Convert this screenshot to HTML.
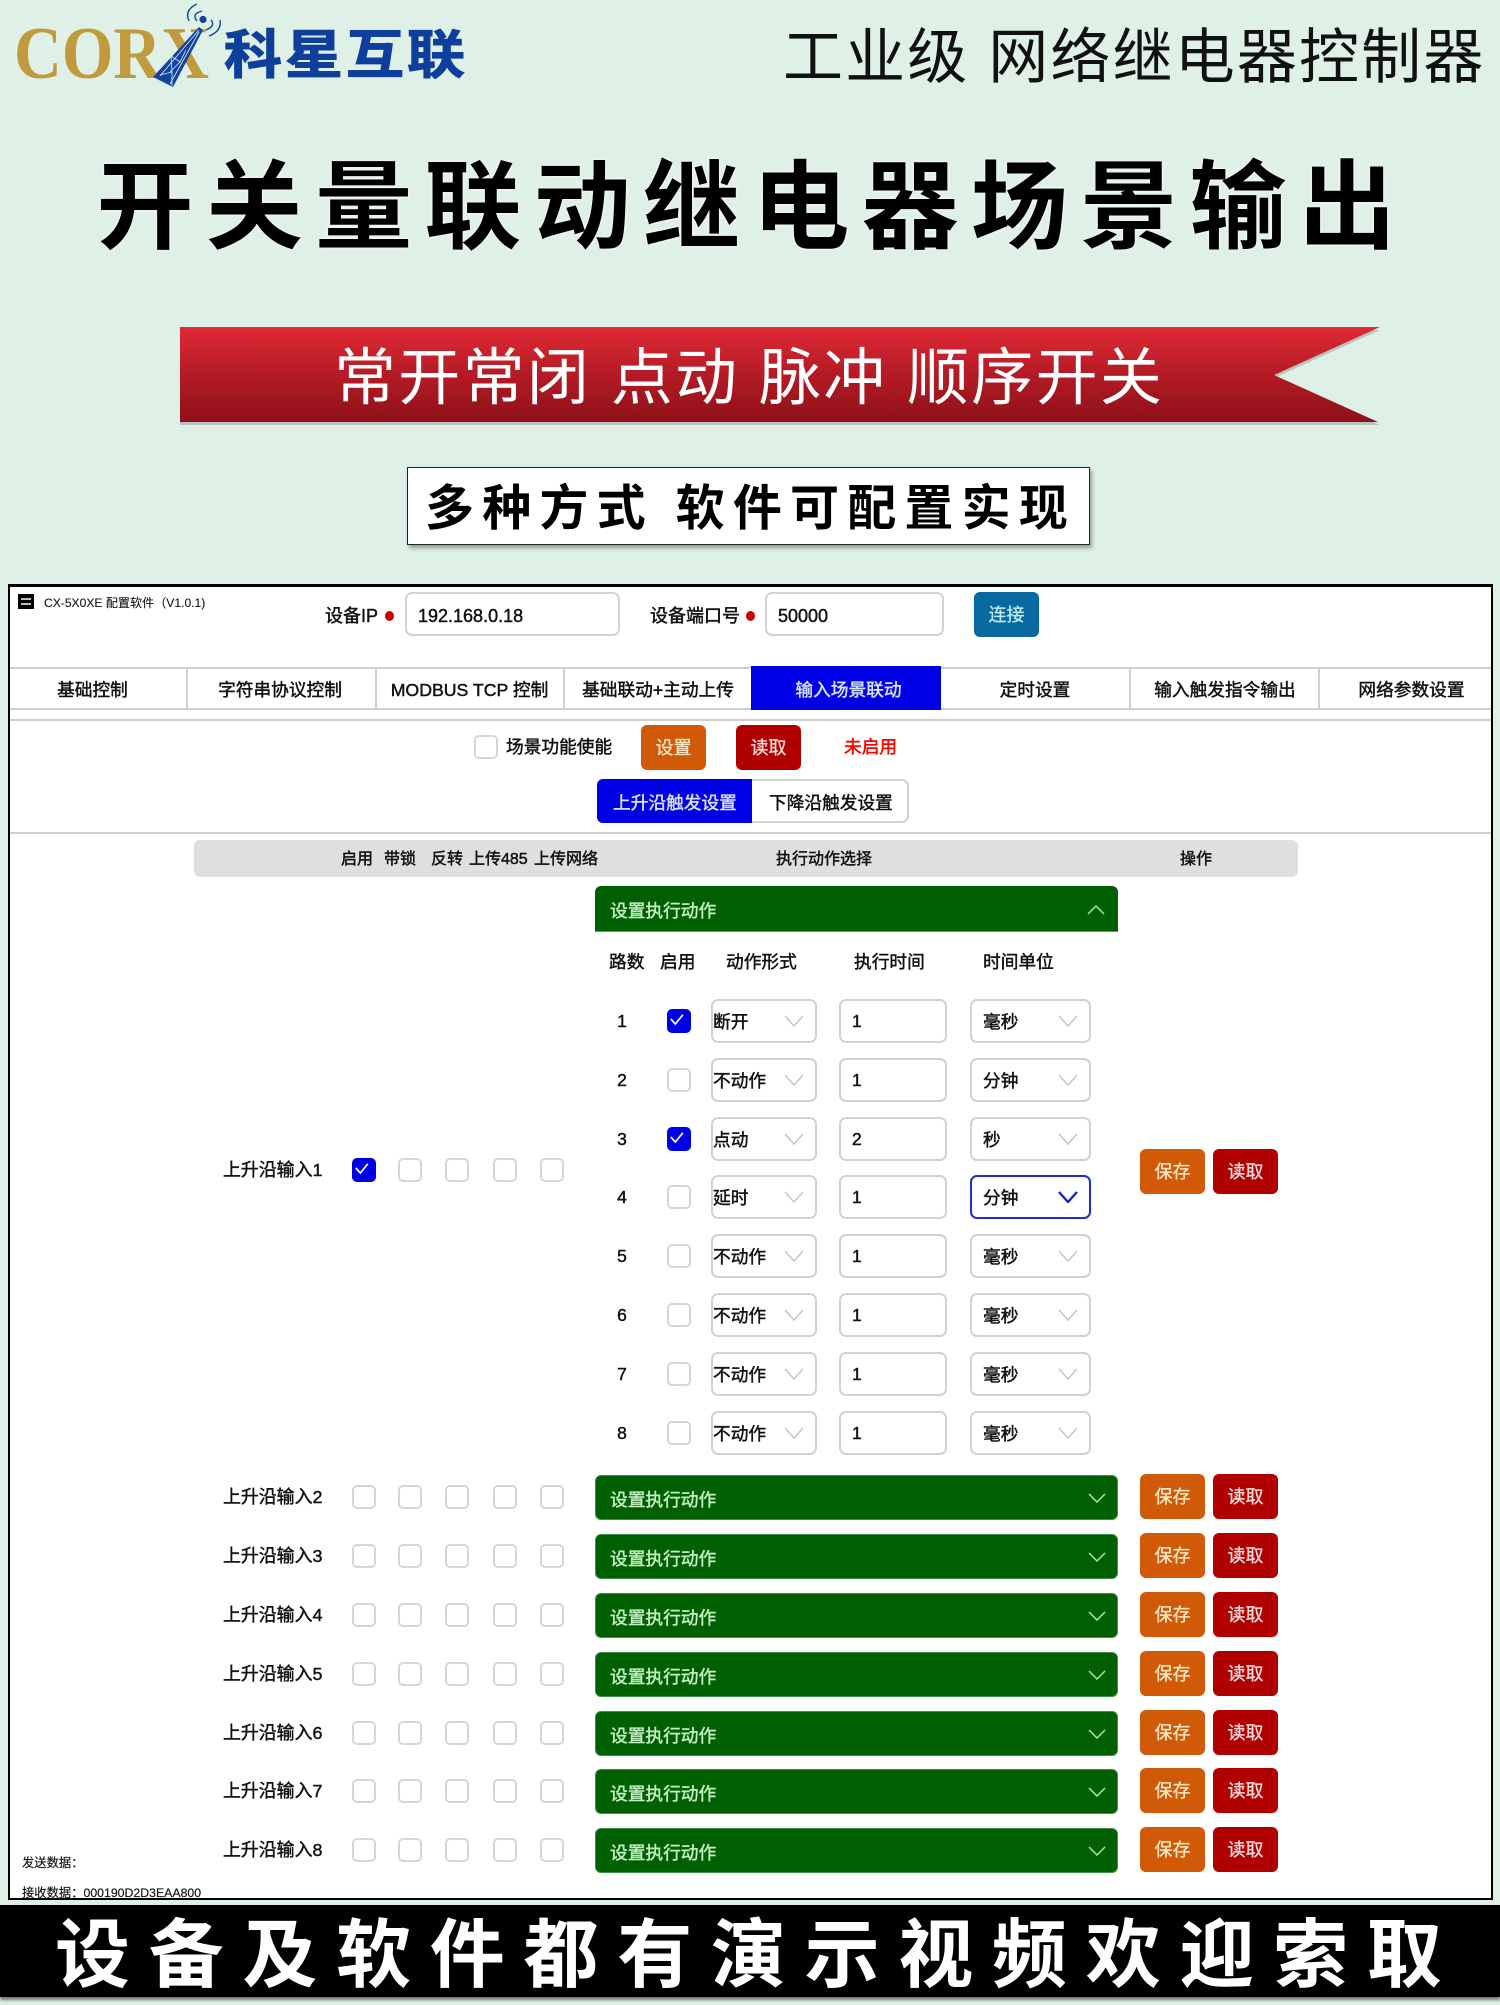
<!DOCTYPE html>
<html lang="zh-CN">
<head>
<meta charset="utf-8">
<title>开关量联动继电器场景输出</title>
<style>
html,body{margin:0;padding:0}
body{width:1500px;height:2000px;position:relative;overflow:hidden;background:#dff0e7;font-family:"Liberation Sans","Noto Sans CJK SC",sans-serif;color:#111}
div,span,svg{position:absolute;box-sizing:border-box}
.t{white-space:nowrap;height:30px;line-height:30px;font-size:17.7px;margin-top:1px;-webkit-text-stroke:.45px currentColor}
.c{text-align:center}
.box{border:2px solid #d6d6d6;border-radius:5px;background:#fff;width:24px;height:24px}
.on{background:#0000e6;border-color:#0000e6}
.in{border:2px solid #d2d2d2;border-radius:7px;background:#fff;height:44px}
.btn{border-radius:6px;height:45px;width:65px;text-align:center;line-height:46px;font-size:18px;-webkit-text-stroke:.3px currentColor}
.or{background:#d05a08;color:#ffeac8}
.rd{background:#b10000;color:#ffdcdc}
.line{background:#cfcfcf;height:2px;left:10px;width:1481px}
.v{background:#cfcfcf;width:2px;top:668px;height:41px}
.row{left:0;width:1500px;height:45px}
.l{left:223px;top:6px;font-size:17.9px}
.x1{left:352px;top:10px}.x2{left:398px;top:10px}.x3{left:445px;top:10px}.x4{left:493px;top:10px}.x5{left:540px;top:10px}
.bar{left:595px;top:0;width:523px;height:45px;background:#005f00;border-radius:6px;border:1px solid #3f8f4a}
.bt{left:610px;top:9px;color:#c4f0c4}
.cv{left:1088px;top:18px;width:18px;height:10px}
.sv{left:1140px;top:-1px}
.rb{left:1213px;top:-1px}
.r{left:0;width:1500px;height:44px}
.n{left:612px;top:6px;width:20px;font-size:17.5px}
.k{left:667px;top:10px}
.s{left:711px;top:0;width:106px}
.i{left:839px;top:0;width:108px}
.u{left:970px;top:0;width:121px}
.st{left:713px;top:7px}
.it{left:852px;top:6px;font-size:17.5px}
.ut{left:983px;top:7px}
.c1{left:784px;top:16px;width:20px;height:12px}
.c2{left:1058px;top:16px;width:20px;height:12px}
</style>
</head>
<body>
<svg width="0" height="0" style="left:0;top:0">
<defs>
<symbol id="chev" viewBox="0 0 20 12"><polyline points="1,1 10,11 19,1" fill="none" stroke="#c8c8c8" stroke-width="1.6"/></symbol>
<symbol id="chevb" viewBox="0 0 20 12"><polyline points="1,1 10,11 19,1" fill="none" stroke="#1a1fd0" stroke-width="2.4"/></symbol>
<symbol id="chevg" viewBox="0 0 18 10"><polyline points="1,1 9,9 17,1" fill="none" stroke="#a6e8a6" stroke-width="1.5"/></symbol>
<symbol id="chk" viewBox="0 0 24 24"><polyline points="4.5,12 10,18 19,7" fill="none" stroke="#fff" stroke-width="2"/></symbol>
</defs>
</svg>

<!-- Logo -->
<div style="left:14px;top:14px;font-family:'Liberation Serif',serif;font-weight:700;font-size:74px;line-height:80px;height:80px;color:#c09a3d;white-space:nowrap;transform:scaleX(.895);transform-origin:0 0">CORX</div>
<svg style="left:140px;top:0" width="90" height="95" viewBox="140 0 90 95">
<polygon points="199,27 203,30 173,87 153,77" fill="#12439f"/>
<path d="M199,30 L160,76 M199,32 L170,84 M186,50 L180,62 L171,56 L172,72 L160,75 M172,72 L172,86 M180,62 L170,72" fill="none" stroke="#dfeff0" stroke-width=".8"/>
<circle cx="203" cy="19.5" r="3.6" fill="#12439f"/>
<path d="M197,4 Q184,10 189,21 M202,11 Q191,14 197,21 M211,20 Q216,26 206,30 M220,20 Q222,31 209,36" fill="none" stroke="#12439f" stroke-width="1.4"/>
</svg>
<div style="left:224px;top:21px;height:70px;line-height:70px;font-size:58px;font-weight:700;letter-spacing:3px;color:#0e3f9c;white-space:nowrap;transform:scaleY(.9);-webkit-text-stroke:1.2px #0e3f9c">科星互联</div>

<!-- Heading -->
<div style="left:783px;top:18px;height:80px;line-height:80px;font-size:60px;letter-spacing:2.15px;color:#111;white-space:nowrap">工业级 网络继电器控制器</div>
<div style="left:96.5px;top:148px;height:120px;line-height:120px;font-size:97px;font-weight:700;letter-spacing:12.3px;color:#000;white-space:nowrap;text-shadow:0 0 3px #fff">开关量联动继电器场景输出</div>

<!-- Ribbon -->
<svg style="left:176px;top:322px" width="1212" height="110" viewBox="176 322 1212 110">
<defs><linearGradient id="rg" x1="0" y1="0" x2="0" y2="1"><stop offset="0" stop-color="#e12a36"/><stop offset=".45" stop-color="#b81c26"/><stop offset="1" stop-color="#8e1019"/></linearGradient></defs>
<polygon points="180,330 1380,330 1274,378 1380,425 180,425" fill="#000" opacity=".18"/>
<polygon points="180,327 1380,327 1274,375 1378,422 180,422" fill="url(#rg)"/>
</svg>
<div style="left:334px;top:339px;height:80px;line-height:80px;font-size:62px;letter-spacing:2.3px;color:#fff;white-space:nowrap">常开常闭 点动 脉冲 顺序开关</div>

<!-- Boxed -->
<div style="left:407px;top:467px;width:683px;height:78px;background:#fff;border:1.5px solid #222;box-shadow:2px 3px 4px rgba(0,0,0,.35)"></div>
<div style="left:425px;top:479px;height:60px;line-height:60px;font-size:49px;font-weight:700;letter-spacing:8.2px;color:#000;white-space:nowrap">多种方式 软件可配置实现</div>

<!-- App frame -->
<div style="left:8px;top:584px;width:1485px;height:1316px;background:#fff;border:2px solid #000;border-top-width:3px"></div>

<div style="left:18px;top:594px;width:16px;height:15px;background:#000"></div>
<div style="left:21px;top:598px;width:10px;height:2px;background:#bbb"></div>
<div style="left:21px;top:603px;width:10px;height:2px;background:#bbb"></div>
<div class="t" style="left:44px;top:587px;font-size:12.1px;-webkit-text-stroke:.1px currentColor">CX-5X0XE 配置软件（V1.0.1)</div>

<div class="t" style="left:325px;top:600px;font-size:18px">设备IP</div>
<div style="left:385px;top:611px;width:9px;height:10px;border-radius:50%;background:#d00000"></div>
<div class="in" style="left:405px;top:592px;width:215px"></div>
<div class="t" style="left:418px;top:600px;font-size:18px">192.168.0.18</div>
<div class="t" style="left:650px;top:600px;font-size:18px">设备端口号</div>
<div style="left:746px;top:611px;width:9px;height:10px;border-radius:50%;background:#d00000"></div>
<div class="in" style="left:765px;top:592px;width:179px"></div>
<div class="t" style="left:778px;top:600px;font-size:18px">50000</div>
<div class="btn" style="left:974px;top:592px;background:#07699f;color:#bfeaf5">连接</div>

<!-- Tabs -->
<div class="line" style="top:667px"></div>
<div class="line" style="top:708px"></div>
<div class="v" style="left:186px"></div>
<div class="v" style="left:375px"></div>
<div class="v" style="left:563px"></div>
<div class="v" style="left:1129px"></div>
<div class="v" style="left:1318px"></div>
<div style="left:751px;top:666px;width:190px;height:44px;background:#0000e6"></div>
<div class="t c" style="left:10px;width:165px;top:674px">基础控制</div>
<div class="t c" style="left:186px;width:188px;top:674px">字符串协议控制</div>
<div class="t c" style="left:376px;width:187px;top:674px">MODBUS TCP 控制</div>
<div class="t c" style="left:564px;width:188px;top:674px">基础联动+主动上传</div>
<div class="t c" style="left:751px;width:195px;top:674px;color:#d8e4ff">输入场景联动</div>
<div class="t c" style="left:941px;width:188px;top:674px">定时设置</div>
<div class="t c" style="left:1130px;width:190px;top:674px">输入触发指令输出</div>
<div class="t c" style="left:1319px;width:185px;top:674px">网络参数设置</div>
<div class="line" style="top:719px"></div>

<!-- Enable row -->
<div class="box" style="left:474px;top:735px"></div>
<div class="t" style="left:506px;top:731px">场景功能使能</div>
<div class="btn or" style="left:641px;top:725px">设置</div>
<div class="btn rd" style="left:736px;top:725px">读取</div>
<div class="t" style="left:844px;top:731px;color:#f00;-webkit-text-stroke:.5px #f00">未启用</div>

<div style="left:597px;top:779px;width:155px;height:44px;background:#0000e6;border-radius:6px 0 0 6px"></div>
<div class="t" style="left:613px;top:787px;color:#d8e4ff">上升沿触发设置</div>
<div style="left:752px;top:779px;width:157px;height:44px;background:#fff;border:2px solid #d2d2d2;border-left:0;border-radius:0 7px 7px 0"></div>
<div class="t" style="left:769px;top:787px">下降沿触发设置</div>
<div class="line" style="top:832px"></div>

<!-- Header bar -->
<div style="left:194px;top:840px;width:1104px;height:37px;background:#dfdfdf;border-radius:6px"></div>
<div class="t" style="left:341px;top:844px;font-size:16px">启用</div>
<div class="t" style="left:384px;top:844px;font-size:16px">带锁</div>
<div class="t" style="left:431px;top:844px;font-size:16px">反转</div>
<div class="t" style="left:469px;top:844px;font-size:16px">上传485</div>
<div class="t" style="left:534px;top:844px;font-size:16px">上传网络</div>
<div class="t" style="left:776px;top:844px;font-size:16px">执行动作选择</div>
<div class="t" style="left:1180px;top:844px;font-size:16px">操作</div>

<!-- Open panel -->
<div style="left:595px;top:886px;width:523px;height:46px;background:#005f00;border-radius:6px 6px 0 0;border-bottom:1px solid #5aa05a"></div>
<div class="t" style="left:610px;top:895px;color:#c4f0c4">设置执行动作</div>
<svg style="left:1087px;top:905px" width="18" height="10" viewBox="0 0 18 10"><polyline points="1,9 9,1 17,9" fill="none" stroke="#a6e8a6" stroke-width="1.5"/></svg>
<div class="t" style="left:609px;top:946px">路数</div>
<div class="t" style="left:660px;top:946px">启用</div>
<div class="t" style="left:726px;top:946px">动作形式</div>
<div class="t" style="left:854px;top:946px">执行时间</div>
<div class="t" style="left:983px;top:946px">时间单位</div>

<div class="r" style="top:999px"><div class="t c n">1</div><div class="box k on"><svg width="20" height="20" viewBox="2 2 20 20" style="left:0;top:0"><use href="#chk"/></svg></div><div class="in s"></div><div class="t st">断开</div><svg class="c1"><use href="#chev"/></svg><div class="in i"></div><div class="t it">1</div><div class="in u"></div><div class="t ut">毫秒</div><svg class="c2"><use href="#chev"/></svg></div>
<div class="r" style="top:1058px"><div class="t c n">2</div><div class="box k"></div><div class="in s"></div><div class="t st">不动作</div><svg class="c1"><use href="#chev"/></svg><div class="in i"></div><div class="t it">1</div><div class="in u"></div><div class="t ut">分钟</div><svg class="c2"><use href="#chev"/></svg></div>
<div class="r" style="top:1117px"><div class="t c n">3</div><div class="box k on"><svg width="20" height="20" viewBox="2 2 20 20" style="left:0;top:0"><use href="#chk"/></svg></div><div class="in s"></div><div class="t st">点动</div><svg class="c1"><use href="#chev"/></svg><div class="in i"></div><div class="t it">2</div><div class="in u"></div><div class="t ut">秒</div><svg class="c2"><use href="#chev"/></svg></div>
<div class="r" style="top:1175px"><div class="t c n">4</div><div class="box k"></div><div class="in s"></div><div class="t st">延时</div><svg class="c1"><use href="#chev"/></svg><div class="in i"></div><div class="t it">1</div><div class="in u" style="border-color:#1a2fd0"></div><div class="t ut">分钟</div><svg class="c2"><use href="#chevb"/></svg></div>
<div class="r" style="top:1234px"><div class="t c n">5</div><div class="box k"></div><div class="in s"></div><div class="t st">不动作</div><svg class="c1"><use href="#chev"/></svg><div class="in i"></div><div class="t it">1</div><div class="in u"></div><div class="t ut">毫秒</div><svg class="c2"><use href="#chev"/></svg></div>
<div class="r" style="top:1293px"><div class="t c n">6</div><div class="box k"></div><div class="in s"></div><div class="t st">不动作</div><svg class="c1"><use href="#chev"/></svg><div class="in i"></div><div class="t it">1</div><div class="in u"></div><div class="t ut">毫秒</div><svg class="c2"><use href="#chev"/></svg></div>
<div class="r" style="top:1352px"><div class="t c n">7</div><div class="box k"></div><div class="in s"></div><div class="t st">不动作</div><svg class="c1"><use href="#chev"/></svg><div class="in i"></div><div class="t it">1</div><div class="in u"></div><div class="t ut">毫秒</div><svg class="c2"><use href="#chev"/></svg></div>
<div class="r" style="top:1411px"><div class="t c n">8</div><div class="box k"></div><div class="in s"></div><div class="t st">不动作</div><svg class="c1"><use href="#chev"/></svg><div class="in i"></div><div class="t it">1</div><div class="in u"></div><div class="t ut">毫秒</div><svg class="c2"><use href="#chev"/></svg></div>

<!-- Input rows -->
<div class="row" style="top:1148px"><div class="t l">上升沿输入1</div><div class="box x1 on"><svg width="20" height="20" viewBox="2 2 20 20" style="left:0;top:0"><use href="#chk"/></svg></div><div class="box x2"></div><div class="box x3"></div><div class="box x4"></div><div class="box x5"></div><div class="btn or sv" style="top:1px">保存</div><div class="btn rd rb" style="top:1px">读取</div></div>

<div class="row" style="top:1475px"><div class="t l">上升沿输入2</div><div class="box x1"></div><div class="box x2"></div><div class="box x3"></div><div class="box x4"></div><div class="box x5"></div><div class="bar"></div><div class="t bt">设置执行动作</div><svg class="cv"><use href="#chevg"/></svg><div class="btn or sv">保存</div><div class="btn rd rb">读取</div></div>
<div class="row" style="top:1534px"><div class="t l">上升沿输入3</div><div class="box x1"></div><div class="box x2"></div><div class="box x3"></div><div class="box x4"></div><div class="box x5"></div><div class="bar"></div><div class="t bt">设置执行动作</div><svg class="cv"><use href="#chevg"/></svg><div class="btn or sv">保存</div><div class="btn rd rb">读取</div></div>
<div class="row" style="top:1593px"><div class="t l">上升沿输入4</div><div class="box x1"></div><div class="box x2"></div><div class="box x3"></div><div class="box x4"></div><div class="box x5"></div><div class="bar"></div><div class="t bt">设置执行动作</div><svg class="cv"><use href="#chevg"/></svg><div class="btn or sv">保存</div><div class="btn rd rb">读取</div></div>
<div class="row" style="top:1652px"><div class="t l">上升沿输入5</div><div class="box x1"></div><div class="box x2"></div><div class="box x3"></div><div class="box x4"></div><div class="box x5"></div><div class="bar"></div><div class="t bt">设置执行动作</div><svg class="cv"><use href="#chevg"/></svg><div class="btn or sv">保存</div><div class="btn rd rb">读取</div></div>
<div class="row" style="top:1711px"><div class="t l">上升沿输入6</div><div class="box x1"></div><div class="box x2"></div><div class="box x3"></div><div class="box x4"></div><div class="box x5"></div><div class="bar"></div><div class="t bt">设置执行动作</div><svg class="cv"><use href="#chevg"/></svg><div class="btn or sv">保存</div><div class="btn rd rb">读取</div></div>
<div class="row" style="top:1769px"><div class="t l">上升沿输入7</div><div class="box x1"></div><div class="box x2"></div><div class="box x3"></div><div class="box x4"></div><div class="box x5"></div><div class="bar"></div><div class="t bt">设置执行动作</div><svg class="cv"><use href="#chevg"/></svg><div class="btn or sv">保存</div><div class="btn rd rb">读取</div></div>
<div class="row" style="top:1828px"><div class="t l">上升沿输入8</div><div class="box x1"></div><div class="box x2"></div><div class="box x3"></div><div class="box x4"></div><div class="box x5"></div><div class="bar"></div><div class="t bt">设置执行动作</div><svg class="cv"><use href="#chevg"/></svg><div class="btn or sv">保存</div><div class="btn rd rb">读取</div></div>

<div class="t" style="left:22px;top:1847px;font-size:12.3px;-webkit-text-stroke:.15px currentColor">发送数据：</div>
<div class="t" style="left:22px;top:1877px;font-size:12.3px;-webkit-text-stroke:.15px currentColor">接收数据：000190D2D3EAA800</div>

<!-- Bottom bar -->
<div style="left:0;top:1905px;width:1500px;height:92px;background:#000;box-shadow:0 3px 3px #777"></div>
<div style="left:55px;top:1904.5px;height:100px;line-height:100px;font-size:75px;font-weight:700;letter-spacing:18.7px;color:#fff;white-space:nowrap">设备及软件都有演示视频欢迎索取</div>
</body>
</html>
